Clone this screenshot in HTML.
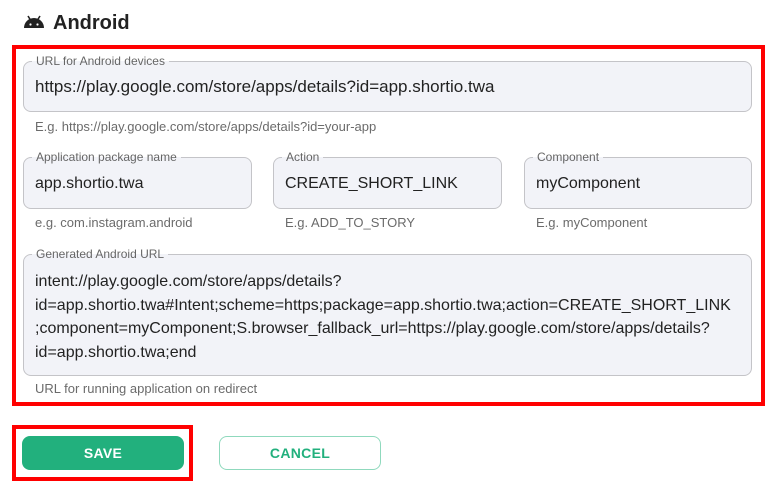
<!DOCTYPE html>
<html><head><meta charset="utf-8"><style>
*{box-sizing:border-box;margin:0;padding:0}
body{width:776px;height:492px;background:#fff;font-family:"Liberation Sans",Arial,sans-serif;position:relative;overflow:hidden;color:#222}
.abs{position:absolute}
.title{left:53px;top:12px;font-size:20px;font-weight:bold;color:#222}
.redbox{border:4px solid #f00}
.f{position:absolute;background:#f2f3f8;border:1px solid #c4c4c8;border-radius:8px}
.lab{position:absolute;top:-8px;left:8px;background:linear-gradient(#fff 50%,#f2f3f8 50%);padding:0 4px;font-size:12px;color:#666;line-height:14px}
.val{position:absolute;left:11px;font-size:16px;color:#222}
.help{position:absolute;font-size:13px;color:#6b6b6b}
.btn{position:absolute;border-radius:8px;font-size:14px;font-weight:bold;text-align:center;line-height:34px;letter-spacing:.3px}
</style></head><body>
<svg class="abs" style="left:23px;top:14px" width="22" height="16" viewBox="0 0 22 16"><path d="M1 14 A10 10 0 0 1 21 14 Z" fill="#222"/><path d="M5 2 L7.5 6 M17 2 L14.5 6" stroke="#222" stroke-width="1.6"/><circle cx="7.5" cy="10.5" r="1.1" fill="#fff"/><circle cx="14.5" cy="10.5" r="1.1" fill="#fff"/></svg>
<div class="abs title">Android</div>
<div class="abs redbox" style="left:12px;top:45px;width:753px;height:361px"></div>
<div class="f" style="left:23px;top:61px;width:729px;height:51px"><div class="lab">URL for Android devices</div><div class="val" style="top:15px;font-size:17px">https://play.google.com/store/apps/details?id=app.shortio.twa</div></div>
<div class="help" style="left:35px;top:119px">E.g. https://play.google.com/store/apps/details?id=your-app</div>
<div class="f" style="left:23px;top:157px;width:229px;height:52px"><div class="lab">Application package name</div><div class="val" style="top:17px">app.shortio.twa</div></div>
<div class="help" style="left:35px;top:215px">e.g. com.instagram.android</div>
<div class="f" style="left:273px;top:157px;width:229px;height:52px"><div class="lab">Action</div><div class="val" style="top:17px">CREATE_SHORT_LINK</div></div>
<div class="help" style="left:285px;top:215px">E.g. ADD_TO_STORY</div>
<div class="f" style="left:524px;top:157px;width:228px;height:52px"><div class="lab">Component</div><div class="val" style="top:17px">myComponent</div></div>
<div class="help" style="left:536px;top:215px">E.g. myComponent</div>
<div class="f" style="left:23px;top:254px;width:729px;height:122px"><div class="lab">Generated Android URL</div><div class="val" style="top:15px;line-height:23.5px;width:712px;white-space:pre">intent://play.google.com/store/apps/details?
id=app.shortio.twa#Intent;scheme=https;package=app.shortio.twa;action=CREATE_SHORT_LINK
;component=myComponent;S.browser_fallback_url=https://play.google.com/store/apps/details?
id=app.shortio.twa;end</div></div>
<div class="help" style="left:35px;top:381px">URL for running application on redirect</div>
<div class="abs redbox" style="left:12px;top:425px;width:181px;height:56px"></div>
<div class="btn" style="left:22px;top:436px;width:162px;height:34px;background:#22b07d;color:#fff">SAVE</div>
<div class="btn" style="left:219px;top:436px;width:162px;height:34px;border:1px solid #8fd9bd;color:#22b07d;line-height:32px">CANCEL</div>
</body></html>
